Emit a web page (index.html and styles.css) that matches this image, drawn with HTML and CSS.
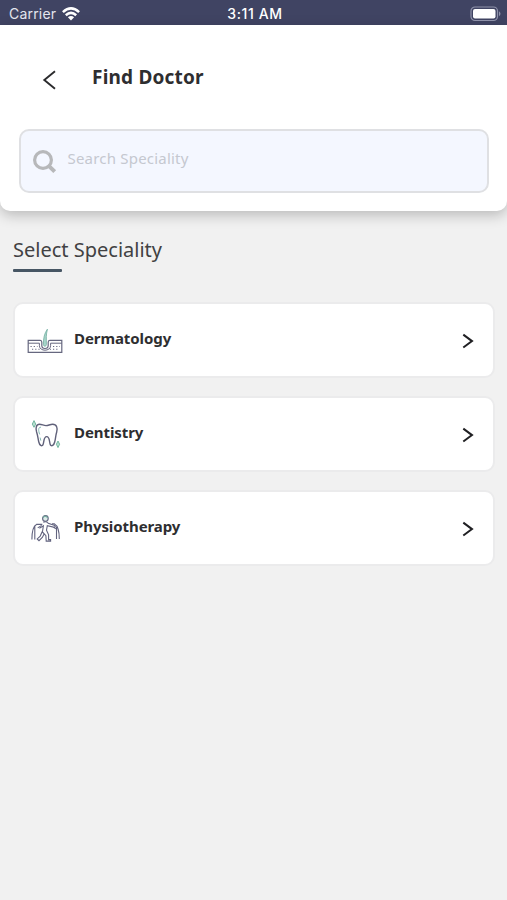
FILE: index.html
```html
<!DOCTYPE html>
<html lang="en">
<head>
<meta charset="utf-8">
<meta name="viewport" content="width=device-width, initial-scale=1">
<title>Find Doctor</title>
<link rel="stylesheet" href="styles.css">
</head>
<body>
<div class="status">
  <div class="carrier"><span>Carrier</span>
    <svg class="wifi" width="18" height="14" viewBox="0 0 18 14" fill="none" stroke="#fff" stroke-width="2.5"><path d="M.9 5.1Q9-2.3 17.1 5.1M3.8 8.2Q9 3.5 14.2 8.2"/><path d="M5.9 10.3Q9 7.7 12.1 10.3L9 13.6Z" fill="#fff" stroke="none"/></svg>
  </div>
  <span class="time">3:11 AM</span>
  <svg class="battery" width="31" height="16" viewBox="0 0 31 16"><rect x="1" y="1" width="26.5" height="13.5" rx="4" fill="none" stroke="#8f92aa" stroke-width="1.2"/><rect x="3" y="3" width="22.5" height="9.5" rx="2" fill="#fff"/><path d="M29 5.3q3 2.5 0 5Z" fill="#8f92aa"/></svg>
</div>
<header class="header">
  <div class="titlebar">
    <svg class="back" width="14" height="20" viewBox="0 0 14 20" fill="none" stroke="#2b2b2d" stroke-width="1.9"><path d="M13 1.3 2.3 10 13 18.7"/></svg>
    <h1 class="title">Find Doctor</h1>
  </div>
  <div class="search">
    <svg class="glass" width="24" height="24" viewBox="0 0 24 24" fill="none" stroke="#b7b8ba"><circle cx="10" cy="10" r="8.4" stroke-width="3.2"/><path d="m15.8 15.8 5.9 5.9" stroke-width="4"/></svg>
    <span class="placeholder">Search Speciality</span>
  </div>
</header>
<main class="content">
  <h2 class="heading">Select Speciality</h2>
  <div class="underline"></div>
  <div class="list">
    <div class="card">
      <svg class="icon" width="36" height="36" viewBox="0 0 36 36" fill="none" stroke="#66677f" stroke-width="1.2">
        <path d="M1.2 17.3h12.1q1.5 0 1.5 2v3.2c0 4 6.4 4 6.4 0v-3.2q0-2 1.5-2h12.1v12H1.2Z"/>
        <path d="M1.2 20.2h11.2v2.5c0 6 11.2 6 11.2 0v-2.5h11.2" stroke-width="1"/>
        <path d="M3.5 23.5h7M5 26.3h8M22.8 26.3h8M26 23.5h7" stroke-dasharray="1.2 2" stroke-width="1.1"/>
        <path d="M20.4 6.2c-3.2 4.3-4 9.2-4 15.2 0 2.4 3 2.4 3 0 0-6-.5-9.5 1-15.2Z" fill="#a9d5ca" stroke="#70ad9f" stroke-width=".8"/>
      </svg>
      <span class="name">Dermatology</span>
      <svg class="next" width="12" height="16" viewBox="0 0 12 16" fill="none" stroke="#202023" stroke-width="2"><path d="m1.3 1.6 8.7 6.5-8.7 6.4"/></svg>
    </div>
    <div class="card">
      <svg class="icon" width="36" height="36" viewBox="0 0 36 36" fill="none" stroke="#60617a" stroke-width="1.4">
        <path d="M12.5 7.3c2.3 0 4.2 1.3 6.5 1.3s4-1.3 6.7-1.3c4 0 5.2 3.8 4 7.7-1.1 3.6-1.1 6.6-2 10-.8 3.4-3.2 4.7-4.3 2.8-1.3-2.2-.3-8.2-3.7-8.2s-2.5 6-3.8 8.2c-1.1 1.9-3.3.6-4.1-2.8-.8-3.4-1-6.4-2.2-10-1.2-3.9-.5-7.7 2.9-7.7Z"/>
        <path d="M14 10.2c-3-.2-2.7 3.5-1.3 7.2M13.1 20.6l.7 3" stroke="#83b8b4" stroke-width="1"/>
        <path d="m7 3.6 1.7 3.5L7 10.3 5.3 7.1ZM31 24l1.6 3.2-1.6 3.4-1.6-3.4Z" fill="#b8dfd1" stroke="#74b7a0" stroke-width="1"/>
      </svg>
      <span class="name">Dentistry</span>
      <svg class="next" width="12" height="16" viewBox="0 0 12 16" fill="none" stroke="#202023" stroke-width="2"><path d="m1.3 1.6 8.7 6.5-8.7 6.4"/></svg>
    </div>
    <div class="card">
      <svg class="icon" width="36" height="36" viewBox="0 0 36 36" fill="none" stroke="#62637f" stroke-width="1.1">
        <circle cx="18.4" cy="7.4" r="2.8" fill="#dcebe8"/>
        <path d="M15.9 6.9q2-3.6 5 0" stroke="#76a89f"/>
        <path d="M16.3 11.2q3-1.2 4.9 1l5.9 2q2.2 1.2.4 2.2l-7.2-1.7-.8 4.5 2.1 4.7v4.7h2v1.5h-4.4l-.3-5.4-3.5-3.7 1-6.2-4 2.5M15.3 20.6l-2.1 4.5-3 2.8 1.8 1.8 3.3-3.3 1.7-3.2"/>
        <path d="M15.3 13.4H9.5q-4.6 2.2-4.6 15.2M7.8 15.5v13.1M25 12.9h2.5q4.8 2.6 4.8 15.1M29.5 16v12M10.7 16.9l4-2.5M26.5 16.4l2.5 1.5"/>
      </svg>
      <span class="name">Physiotherapy</span>
      <svg class="next" width="12" height="16" viewBox="0 0 12 16" fill="none" stroke="#202023" stroke-width="2"><path d="m1.3 1.6 8.7 6.5-8.7 6.4"/></svg>
    </div>
  </div>
</main>
</body>
</html>
```
FILE: styles.css
```css
* { box-sizing: border-box; }
body {
  margin: 0;
  min-height: 900px;
  background: #f1f1f1;
  font-family: "Noto Sans", sans-serif;
  color: #2e2e30;
}
svg { display: block; flex: none; }
h1, h2 { margin: 0; }
.status {
  display: grid;
  grid-template-columns: 1fr auto 1fr;
  align-items: center;
  height: 25px;
  padding: 2px 6px 0 9px;
  background: #404463;
  color: #fff;
  font: 14px/20px Inter, sans-serif;
}
.carrier { display: flex; align-items: center; gap: 6px; color: #e4e5ee; letter-spacing: .2px; }
.time { font-weight: 500; font-size: 14px; letter-spacing: .6px; }
.battery { justify-self: end; }
.header {
  height: 186px;
  padding: 37px 18px 0 19px;
  background: #fff;
  border-radius: 0 0 10px 10px;
  box-shadow: 0 4px 14px rgba(0, 0, 0, .24);
}
.titlebar { display: flex; height: 30px; padding-left: 23px; }
.back { margin-top: 8px; }
.title { margin-left: 36px; font-size: 19px; line-height: 31px; font-weight: 700; letter-spacing: .2px; }
.search {
  display: flex;
  height: 64px;
  margin-top: 37px;
  padding: 0 12px;
  border: 2px solid #dfe0e3;
  border-radius: 10px;
  background: #f4f7ff;
}
.glass { margin-top: 19px; }
.placeholder { margin-left: 10.5px; font-size: 15px; line-height: 55px; letter-spacing: .2px; color: #c5c8d0; }
.content { padding: 24px 12px 0 13px; }
.heading { font-size: 20px; line-height: 30px; font-weight: 400; color: #414143; }
.underline { width: 49px; height: 3px; margin-top: 4px; border-radius: 1px; background: #475664; }
.list { display: grid; gap: 18px; margin-top: 30px; }
.card {
  display: flex;
  align-items: center;
  height: 76px;
  padding: 0 19px 0 12px;
  border: 2px solid #ebebec;
  border-radius: 10px;
  background: #fff;
}
.icon { margin-top: 2px; }
.name { flex: 1; margin: -5px 0 0 11px; font-size: 15px; line-height: 24px; font-weight: 700; letter-spacing: -.08px; }
.next { margin-top: 1px; }
```
